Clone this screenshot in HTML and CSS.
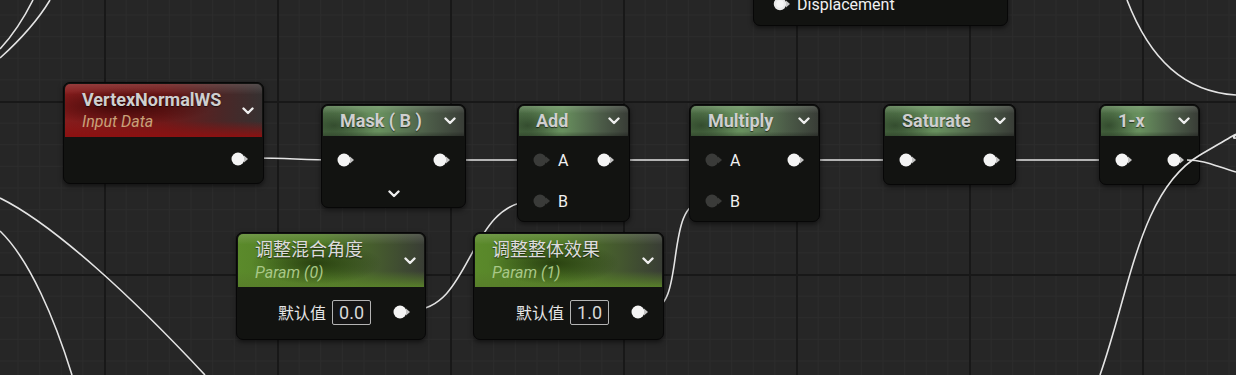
FILE: index.html
```html
<!DOCTYPE html>
<html lang="zh-CN">
<head>
    <meta charset="UTF-8">
    <title>Material Graph</title>
    <link rel="stylesheet" href="styles.css">
</head>
<body>
<div class="graph">
    <svg class="wires" width="1236" height="375" viewBox="0 0 1236 375">
        <path d="M0,58 C20,40 38,20 50,0"/>
        <path d="M0,49 C14,34 25,16 33,0"/>
        <path d="M0,198 C55,225 135,300 205,375"/>
        <path d="M0,231 C30,260 55,320 72,375"/>
        <path d="M1127,0 C1150,60 1185,92 1236,95"/>
        <path d="M250,158 C290,158 300,160 338,160"/>
        <path d="M452,160 L534,160"/>
        <path d="M616,160 L705,160"/>
        <path d="M805,160 L900,160"/>
        <path d="M1002,160 L1116,160"/>
        <path d="M412,310 C472,310 468,201 534,201"/>
        <path d="M649,310 C688,310 662,201 705,201"/>
    </svg>

    <div class="node disp">
        <div class="node-body">
            <div class="row start">
                <svg class="pin" width="18" height="14" viewBox="0 0 18 14"><circle cx="7" cy="7" r="5" fill="none" stroke="#e8e8e8" stroke-width="2.5"/><polygon points="13,3.5 17,7 13,10.5" fill="#bdbdbd"/></svg>
                <span class="pin-label">Displacement</span>
            </div>
        </div>
    </div>

    <div class="node vnws">
        <div class="node-head red tall">
            <div class="titles">
                <span class="title">VertexNormalWS</span>
                <span class="subtitle tan">Input Data</span>
            </div>
            <svg class="chev" width="12" height="8" viewBox="0 0 12 8"><polyline points="1.5,1.5 6,6 10.5,1.5"/></svg>
        </div>
        <div class="node-body">
            <div class="row end">
                <svg class="pin" width="18" height="14" viewBox="0 0 18 14"><circle cx="7" cy="7" r="6.5"/><polygon points="13,3.5 17,7 13,10.5"/></svg>
            </div>
        </div>
    </div>

    <div class="node mask">
        <div class="node-head green">
            <span class="title">Mask ( B )</span>
            <svg class="chev" width="12" height="8" viewBox="0 0 12 8"><polyline points="1.5,1.5 6,6 10.5,1.5"/></svg>
        </div>
        <div class="node-body">
            <div class="row">
                <svg class="pin" width="18" height="14" viewBox="0 0 18 14"><circle cx="7" cy="7" r="6.5"/><polygon points="13,3.5 17,7 13,10.5"/></svg>
                <svg class="pin" width="18" height="14" viewBox="0 0 18 14"><circle cx="7" cy="7" r="6.5"/><polygon points="13,3.5 17,7 13,10.5"/></svg>
            </div>
            <div class="expand">
                <svg class="chev" width="12" height="8" viewBox="0 0 12 8"><polyline points="1.5,1.5 6,6 10.5,1.5"/></svg>
            </div>
        </div>
    </div>

    <div class="node add">
        <div class="node-head green">
            <span class="title">Add</span>
            <svg class="chev" width="12" height="8" viewBox="0 0 12 8"><polyline points="1.5,1.5 6,6 10.5,1.5"/></svg>
        </div>
        <div class="node-body">
            <div class="row">
                <div class="in">
                    <svg class="pin dim" width="18" height="14" viewBox="0 0 18 14"><circle cx="7" cy="7" r="6.5"/><polygon points="13,3.5 17,7 13,10.5"/></svg>
                    <span class="pin-label">A</span>
                </div>
                <svg class="pin" width="18" height="14" viewBox="0 0 18 14"><circle cx="7" cy="7" r="6.5"/><polygon points="13,3.5 17,7 13,10.5"/></svg>
            </div>
            <div class="row second">
                <div class="in">
                    <svg class="pin dim" width="18" height="14" viewBox="0 0 18 14"><circle cx="7" cy="7" r="6.5"/><polygon points="13,3.5 17,7 13,10.5"/></svg>
                    <span class="pin-label">B</span>
                </div>
            </div>
        </div>
    </div>

    <div class="node mult">
        <div class="node-head green">
            <span class="title">Multiply</span>
            <svg class="chev" width="12" height="8" viewBox="0 0 12 8"><polyline points="1.5,1.5 6,6 10.5,1.5"/></svg>
        </div>
        <div class="node-body">
            <div class="row">
                <div class="in">
                    <svg class="pin dim" width="18" height="14" viewBox="0 0 18 14"><circle cx="7" cy="7" r="6.5"/><polygon points="13,3.5 17,7 13,10.5"/></svg>
                    <span class="pin-label">A</span>
                </div>
                <svg class="pin" width="18" height="14" viewBox="0 0 18 14"><circle cx="7" cy="7" r="6.5"/><polygon points="13,3.5 17,7 13,10.5"/></svg>
            </div>
            <div class="row second">
                <div class="in">
                    <svg class="pin dim" width="18" height="14" viewBox="0 0 18 14"><circle cx="7" cy="7" r="6.5"/><polygon points="13,3.5 17,7 13,10.5"/></svg>
                    <span class="pin-label">B</span>
                </div>
            </div>
        </div>
    </div>

    <div class="node sat">
        <div class="node-head green">
            <span class="title">Saturate</span>
            <svg class="chev" width="12" height="8" viewBox="0 0 12 8"><polyline points="1.5,1.5 6,6 10.5,1.5"/></svg>
        </div>
        <div class="node-body">
            <div class="row">
                <svg class="pin" width="18" height="14" viewBox="0 0 18 14"><circle cx="7" cy="7" r="6.5"/><polygon points="13,3.5 17,7 13,10.5"/></svg>
                <svg class="pin" width="18" height="14" viewBox="0 0 18 14"><circle cx="7" cy="7" r="6.5"/><polygon points="13,3.5 17,7 13,10.5"/></svg>
            </div>
        </div>
    </div>

    <div class="node onex">
        <div class="node-head green">
            <span class="title">1-x</span>
            <svg class="chev" width="12" height="8" viewBox="0 0 12 8"><polyline points="1.5,1.5 6,6 10.5,1.5"/></svg>
        </div>
        <div class="node-body">
            <div class="row">
                <svg class="pin" width="18" height="14" viewBox="0 0 18 14"><circle cx="7" cy="7" r="6.5"/><polygon points="13,3.5 17,7 13,10.5"/></svg>
                <svg class="pin" width="18" height="14" viewBox="0 0 18 14"><circle cx="7" cy="7" r="6.5"/><polygon points="13,3.5 17,7 13,10.5"/></svg>
            </div>
        </div>
    </div>

    <div class="node p0">
        <div class="node-head param tall">
            <div class="titles">
                <span class="title cjk">调整混合角度</span>
                <span class="subtitle lime">Param (0)</span>
            </div>
            <svg class="chev" width="12" height="8" viewBox="0 0 12 8"><polyline points="1.5,1.5 6,6 10.5,1.5"/></svg>
        </div>
        <div class="node-body">
            <div class="row end value">
                <span class="value-label">默认值</span>
                <span class="value-box">0.0</span>
                <svg class="pin" width="18" height="14" viewBox="0 0 18 14"><circle cx="7" cy="7" r="6.5"/><polygon points="13,3.5 17,7 13,10.5"/></svg>
            </div>
        </div>
    </div>

    <div class="node p1">
        <div class="node-head param tall">
            <div class="titles">
                <span class="title cjk">调整整体效果</span>
                <span class="subtitle lime">Param (1)</span>
            </div>
            <svg class="chev" width="12" height="8" viewBox="0 0 12 8"><polyline points="1.5,1.5 6,6 10.5,1.5"/></svg>
        </div>
        <div class="node-body">
            <div class="row end value">
                <span class="value-label">默认值</span>
                <span class="value-box">1.0</span>
                <svg class="pin" width="18" height="14" viewBox="0 0 18 14"><circle cx="7" cy="7" r="6.5"/><polygon points="13,3.5 17,7 13,10.5"/></svg>
            </div>
        </div>
    </div>

    <svg class="wires top" width="1236" height="375" viewBox="0 0 1236 375">
        <path d="M1100,375 C1130,290 1140,190 1200,155 S1225,140 1236,138"/>
        <path d="M1187,160 C1205,160 1215,166 1236,172"/>
    </svg>
</div>
</body>
</html>
```

FILE: styles.css
```css
body { margin: 0; background: #262626; font-family: Roboto, "Noto Sans CJK SC", sans-serif; }

.graph {
    position: relative; width: 1236px; height: 375px; overflow: hidden;
    background-color: #262626;
    background-image:
        linear-gradient(to right, #181818 2px, transparent 2px),
        linear-gradient(to bottom, #181818 2px, transparent 2px),
        linear-gradient(to right, #2c2c2c 1px, transparent 1px),
        linear-gradient(to bottom, #2c2c2c 1px, transparent 1px);
    background-size: 173px 173px, 173px 173px, 21.625px 21.625px, 21.625px 21.625px;
    background-position: 104px 101px;
}

.wires { position: absolute; left: 0; top: 0; z-index: 1; }
.wires.top { z-index: 3; }
.wires path { fill: none; stroke: #e4e4e4; stroke-width: 1.6; }

/* nodes */
.node {
    position: absolute; z-index: 2; box-sizing: border-box;
    background: #121311; border: 1px solid #070707; border-radius: 7px; padding: 1px;
    box-shadow: 0 2px 5px rgba(0, 0, 0, 0.55);
}
.vnws { left: 63px; top: 82px; width: 201px; }
.mask { left: 321px; top: 104px; width: 145px; }
.add  { left: 517px; top: 104px; width: 113px; }
.mult { left: 689px; top: 104px; width: 131px; }
.sat  { left: 883px; top: 104px; width: 133px; }
.onex { left: 1099px; top: 104px; width: 101px; }
.p0   { left: 236px; top: 232px; width: 190px; }
.p1   { left: 473px; top: 232px; width: 191px; }
.disp { left: 753px; top: -22px; width: 255px; }

.node-head {
    display: flex; align-items: center; justify-content: space-between;
    height: 30px; padding: 0 8px 0 17px; border-radius: 5px 5px 0 0;
}
.node-head.tall { height: 53px; }
.titles { display: flex; flex-direction: column; }
.title { font-size: 18px; font-weight: bold; color: #cfcfcf; text-shadow: 0 1px 1px rgba(0, 0, 0, 0.6); line-height: 22px; }
.title.cjk { font-weight: normal; font-size: 18px; color: #dcdcdc; line-height: 24px; }
.subtitle { font-size: 16px; font-style: italic; line-height: 22px; }
.subtitle.tan { color: #c9a179; }
.subtitle.lime { color: #a9c887; }

.chev { display: block; }
.chev polyline { fill: none; stroke: #eeeeee; stroke-width: 2.4; stroke-linecap: round; stroke-linejoin: round; }

.node-head.green {
    background:
        linear-gradient(to bottom, rgba(255, 255, 255, 0.14), transparent 25%, transparent 85%, rgba(0, 0, 0, 0.25)),
        radial-gradient(ellipse 30% 70% at 8% 65%, rgba(20, 35, 18, 0.55), transparent),
        linear-gradient(to right, #587c4f 0%, #68905e 40%, #4c5c48 75%, #393d37 100%);
}
.node-head.red {
    background:
        linear-gradient(to bottom, rgba(255, 255, 255, 0.14), transparent 20%),
        radial-gradient(ellipse 45% 35% at 30% 42%, rgba(40, 0, 0, 0.7), transparent),
        linear-gradient(to bottom, transparent 70%, #8c1111 100%),
        linear-gradient(to right, #861c1c 0%, #6f1919 50%, #4a2727 80%, #363131 100%);
}
.node-head.param {
    background:
        linear-gradient(to bottom, rgba(255, 255, 255, 0.14), transparent 20%),
        radial-gradient(ellipse 35% 40% at 42% 55%, rgba(25, 40, 8, 0.7), transparent),
        linear-gradient(to bottom, transparent 70%, #587f2a 100%),
        linear-gradient(to right, #5b8a2b 0%, #4f7a25 45%, #44572f 78%, #393d35 100%);
}

.node-body { padding: 14px 13px 13px 14px; }
.row { display: flex; align-items: center; justify-content: space-between; height: 20px; }
.row.end { justify-content: flex-end; }
.row.start { justify-content: flex-start; gap: 6px; }
.row.second { margin-top: 21px; }
.in { display: flex; align-items: center; gap: 7px; }
.pin { display: block; }
.pin circle { fill: #f4f4f4; }
.pin polygon { fill: #c4c4c4; }
.pin.dim circle, .pin.dim polygon { fill: #3a3b39; }
.pin-label { font-size: 16px; color: #f0f0f0; }

.mask .node-body { padding-bottom: 4px; }
.add .node-body, .mult .node-body { padding-bottom: 9px; }
.vnws .node-body { padding-top: 12px; }
.disp .node-body { padding: 14px 13px 10px 18px; }

.expand { display: flex; justify-content: center; height: 16px; align-items: center; margin-top: 16px; }

.p0 .node-body, .p1 .node-body { padding-top: 12px; padding-bottom: 13px; }
.row.value { height: 26px; }
.value-label { font-size: 16px; color: #e6e6e6; margin-right: 6px; }
.value-box {
    box-sizing: border-box; height: 25px; padding: 0 6px; line-height: 23px;
    border: 1px solid #b4b4b4; border-radius: 2px; background: #141414;
    font-size: 18px; color: #d8d8d8; margin-right: 22px;
}
```
